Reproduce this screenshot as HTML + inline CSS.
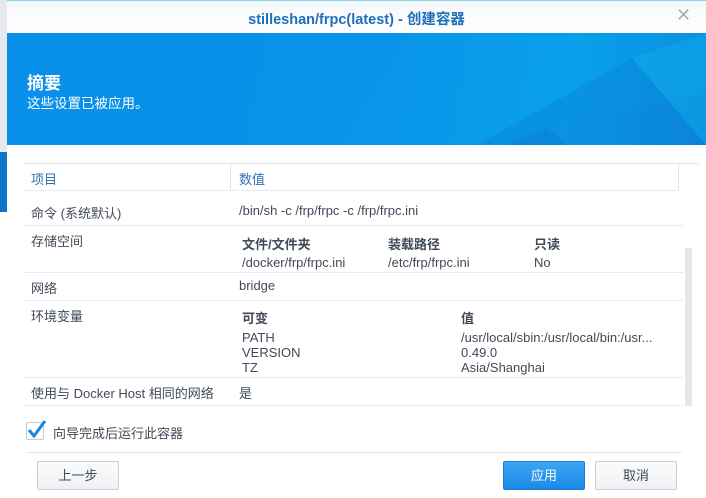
<!DOCTYPE html>
<html><head><meta charset="utf-8"><style>
body{margin:0;width:706px;height:498px;overflow:hidden;background:#fff;font-family:"Liberation Sans","Noto Sans CJK SC",sans-serif;font-size:13px;color:#404a58;position:relative}
.a{position:absolute}
.sep{position:absolute;left:24px;width:660px;height:1px;background:#e8ecef}
</style></head><body>
<div class="a" style="left:0;top:0;width:7px;height:152px;background:#e6eaee"></div>
<div class="a" style="left:0;top:152px;width:7px;height:60px;background:#0e75c8"></div>
<div class="a" style="left:7px;top:0;width:699px;height:33px;background:linear-gradient(#f4f8fb,#fff)"></div>
<div class="a" style="left:7px;top:0;width:699px;height:1px;background:#7fd8f0"></div>
<div class="a" style="left:7px;top:0;width:699px;top:8px;text-align:center;font-size:14.5px;font-weight:bold;color:#1e6fb8">stilleshan/frpc(latest) - 创建容器</div>
<div class="a" style="left:676px;top:5px;font-size:18px;color:#a8b0b8">✕</div>
<div class="a" style="left:7px;top:33px;width:699px;height:112px;background:linear-gradient(100deg,#0890ea 0%,#0a92e8 55%,#0aa0ea 80%,#0a88dc 100%);overflow:hidden">
<svg width="699" height="112" style="position:absolute;left:0;top:0"><polygon points="400,0 699,0 699,60 470,112 330,112" fill="#0a9eec" opacity=".3"/><polygon points="470,112 625,25 699,112" fill="#0b7cd6" opacity=".35"/><polygon points="625,25 699,0 699,112" fill="#18b5f0" opacity=".3"/><polygon points="500,112 540,95 560,112" fill="#0c6fc8" opacity=".3"/></svg>
<div class="a" style="left:20px;top:36px;font-size:17px;font-weight:bold;color:#fff">摘要</div>
<div class="a" style="left:20px;top:59px;font-size:13.5px;color:#fff">这些设置已被应用。</div>
</div>
<div class="sep" style="top:163px;width:675px;background:#dde2e7"></div>
<div class="a" style="left:230px;top:164px;width:1px;height:26px;background:#e3e7eb"></div>
<div class="a" style="left:678px;top:164px;width:1px;height:26px;background:#e3e7eb"></div>
<div class="a" style="left:31px;top:169px;color:#2a72b8">项目</div>
<div class="a" style="left:239px;top:169px;color:#2a72b8">数值</div>
<div class="sep" style="top:190px;width:655px"></div>
<div class="a" style="left:31px;top:203px">命令 (系统默认)</div>
<div class="a" style="left:239px;top:203px">/bin/sh -c /frp/frpc -c /frp/frpc.ini</div>
<div class="sep" style="top:225px"></div>
<div class="a" style="left:31px;top:231px">存储空间</div>
<div class="a" style="left:242px;top:234px;font-weight:bold">文件/文件夹</div>
<div class="a" style="left:388px;top:234px;font-weight:bold">装载路径</div>
<div class="a" style="left:534px;top:234px;font-weight:bold">只读</div>
<div class="a" style="left:242px;top:255px">/docker/frp/frpc.ini</div>
<div class="a" style="left:388px;top:255px">/etc/frp/frpc.ini</div>
<div class="a" style="left:534px;top:255px">No</div>
<div class="sep" style="top:272px"></div>
<div class="a" style="left:31px;top:278px">网络</div>
<div class="a" style="left:239px;top:278px">bridge</div>
<div class="sep" style="top:300px"></div>
<div class="a" style="left:31px;top:306px">环境变量</div>
<div class="a" style="left:242px;top:308px;font-weight:bold">可变</div>
<div class="a" style="left:461px;top:308px;font-weight:bold">值</div>
<div class="a" style="left:242px;top:330px;line-height:15px">PATH<br>VERSION<br>TZ</div>
<div class="a" style="left:461px;top:330px;line-height:15px">/usr/local/sbin:/usr/local/bin:/usr...<br>0.49.0<br>Asia/Shanghai</div>
<div class="sep" style="top:377px"></div>
<div class="a" style="left:31px;top:383px">使用与 Docker Host 相同的网络</div>
<div class="a" style="left:239px;top:383px">是</div>
<div class="sep" style="top:405px"></div>
<div class="a" style="left:685px;top:248px;width:7px;height:158px;background:#e3e6ea"></div>
<div class="a" style="left:26px;top:422px;width:16px;height:16px;border:1px solid #c4ccd4;border-radius:2px;background:#fff"></div>
<svg class="a" style="left:25px;top:418px" width="22" height="22"><path d="M4 12 L9 18 L20 3" stroke="#1a86e0" stroke-width="3" fill="none"/></svg>
<div class="a" style="left:53px;top:423px">向导完成后运行此容器</div>
<div class="a" style="left:27px;top:452px;width:655px;height:1px;background:#e1e5e9"></div>
<div class="a" style="left:37px;top:461px;width:80px;height:27px;border:1px solid #c7cfd7;border-radius:2px;background:linear-gradient(#fafbfc,#eef1f4);text-align:center;line-height:27px">上一步</div>
<div class="a" style="left:503px;top:461px;width:80px;height:27px;border:1px solid #1b7fd6;border-radius:2px;background:linear-gradient(#3ba6f2,#1a8ae6);color:#fff;text-align:center;line-height:27px">应用</div>
<div class="a" style="left:595px;top:461px;width:80px;height:27px;border:1px solid #c7cfd7;border-radius:2px;background:linear-gradient(#fafbfc,#eef1f4);text-align:center;line-height:27px">取消</div>
</body></html>
